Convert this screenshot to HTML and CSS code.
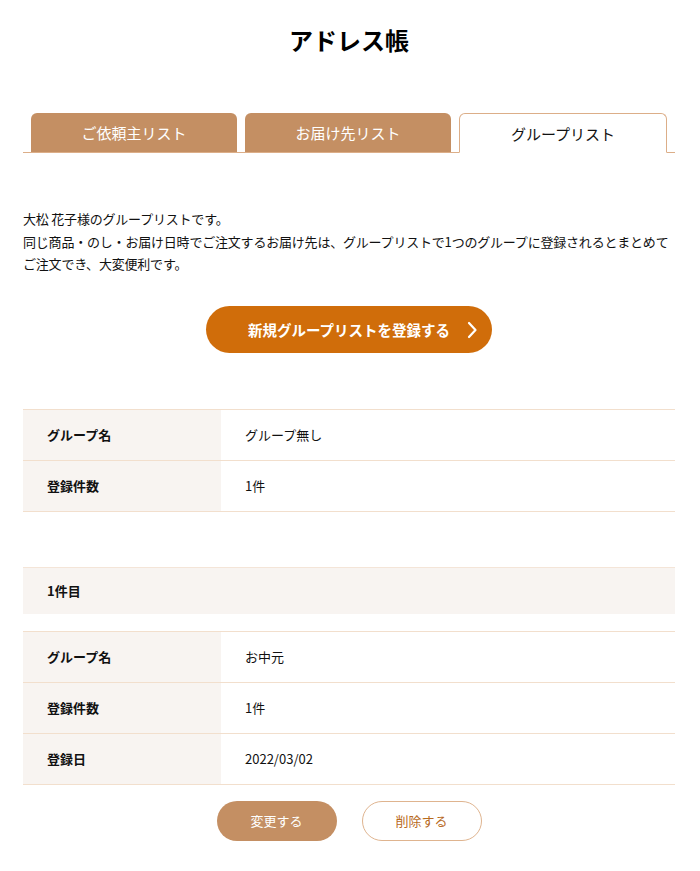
FILE: index.html
```html
<!DOCTYPE html>
<html lang="ja">
<head>
<meta charset="utf-8">
<title>アドレス帳</title>
<link rel="stylesheet" href="styles.css">
</head>
<body>
<div class="page">
  <h1 class="title">アドレス帳</h1>

  <div class="tabs">
    <div class="tab">ご依頼主リスト</div>
    <div class="tab">お届け先リスト</div>
    <div class="tab tab-active">グループリスト</div>
  </div>

  <p class="lead">大松 花子様のグループリストです。<br>同じ商品・のし・お届け日時でご注文するお届け先は、グループリストで1つのグループに登録されるとまとめてご注文でき、大変便利です。</p>

  <div class="cta-wrap">
    <a class="cta" href="#">新規グループリストを登録する
      <svg class="chev" width="12" height="18" viewBox="0 0 12 18"><path d="M3 2 L9.5 9 L3 16" fill="none" stroke="#fff" stroke-width="2.2" stroke-linecap="round" stroke-linejoin="round"/></svg>
    </a>
  </div>

  <div class="table table-first">
    <div class="row"><div class="th">グループ名</div><div class="td">グループ無し</div></div>
    <div class="row"><div class="th">登録件数</div><div class="td">1件</div></div>
  </div>

  <div class="section-head">1件目</div>

  <div class="table table-second">
    <div class="row"><div class="th">グループ名</div><div class="td">お中元</div></div>
    <div class="row"><div class="th">登録件数</div><div class="td">1件</div></div>
    <div class="row"><div class="th">登録日</div><div class="td">2022/03/02</div></div>
  </div>

  <div class="actions">
    <a class="btn btn-edit" href="#">変更する</a>
    <a class="btn btn-delete" href="#">削除する</a>
  </div>
</div>
</body>
</html>
```

FILE: styles.css
```css
* { box-sizing: border-box; }
html, body { margin: 0; padding: 0; background: #fff; }
body {
  font-family: "Noto Sans CJK JP", "Noto Sans", sans-serif;
  color: #111;
}
a { text-decoration: none; }
.page {
  width: 700px;
  padding: 22px 25px 0 23px;
}
.title {
  margin: 0;
  font-size: 24px;
  line-height: 36px;
  font-weight: 700;
  text-align: center;
  color: #000;
}
.tabs {
  margin-top: 55px;
  display: flex;
  align-items: flex-end;
  gap: 8px;
  padding: 0 8px;
  border-bottom: 1px solid #dcae88;
}
.tab {
  flex: 1;
  height: 39px;
  display: flex;
  align-items: center;
  justify-content: center;
  background: #c48f63;
  color: #fff;
  font-size: 15px;
  border-radius: 6px 6px 0 0;
}
.tab-active {
  background: #fff;
  color: #111;
  height: 40px;
  margin-bottom: -1px;
  border: 1px solid #dcae88;
  border-bottom: 1px solid #fff;
}
.lead {
  margin: 55px 0 0;
  font-size: 13px;
  line-height: 22.5px;
  letter-spacing: -0.2px;
  color: #111;
}
.cta-wrap {
  margin-top: 30px;
  display: flex;
  justify-content: center;
}
.cta {
  position: relative;
  width: 286px;
  height: 47px;
  border-radius: 24px;
  background: #d06d0a;
  color: #fff;
  font-size: 14.5px;
  font-weight: 700;
  display: flex;
  align-items: center;
  justify-content: center;
}
.chev {
  position: absolute;
  right: 14px;
  top: 15px;
}
.table {
  border-top: 1px solid #f2dfcd;
}
.table-first { margin-top: 56px; }
.table-second { margin-top: 17px; }
.row {
  display: flex;
  height: 51px;
  border-bottom: 1px solid #f2dfcd;
}
.th {
  width: 198px;
  background: #f8f4f1;
  font-size: 13px;
  font-weight: 700;
  padding-left: 24px;
  display: flex;
  align-items: center;
  color: #111;
}
.td {
  flex: 1;
  font-size: 13px;
  padding-left: 24px;
  display: flex;
  align-items: center;
  color: #111;
}
.section-head {
  margin-top: 55px;
  height: 47px;
  border-top: 1px solid #f4e5d8;
  background: #f8f4f1;
  font-size: 13px;
  font-weight: 700;
  padding-left: 24px;
  display: flex;
  align-items: center;
}
.actions {
  margin-top: 16px;
  display: flex;
  justify-content: center;
  gap: 25px;
}
.btn {
  width: 120px;
  height: 40px;
  border-radius: 20px;
  display: flex;
  align-items: center;
  justify-content: center;
  font-size: 13px;
}
.btn-edit {
  background: #c48f63;
  color: #fff;
}
.btn-delete {
  background: #fff;
  border: 1px solid #dfb48f;
  color: #b86a1e;
}
```
